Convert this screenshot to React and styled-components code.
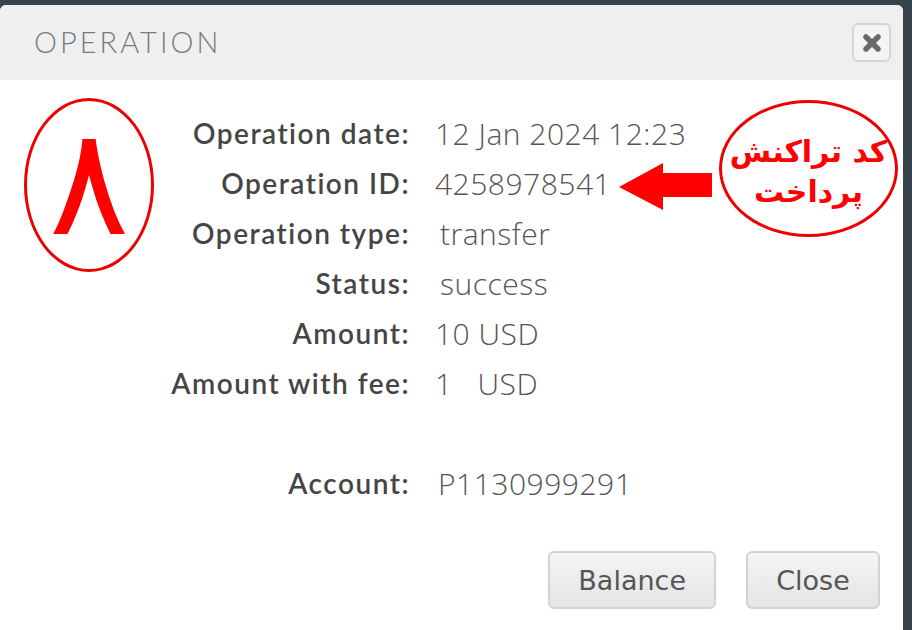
import React from "react";
import styled, { createGlobalStyle } from "styled-components";

const GlobalStyle = createGlobalStyle`
  html, body {
    margin: 0;
    padding: 0;
    background: #37444b;
  }
  body {
    width: 912px;
    height: 630px;
    overflow: hidden;
  }
`;

const rows = [
  { label: "Operation date:", value: "12 Jan 2024 12:23" },
  { label: "Operation ID:", value: "4258978541" },
  { label: "Operation type:", value: "transfer", indent: 5 },
  { label: "Status:", value: "success", indent: 5 },
  { label: "Amount:", value: "10 USD" },
  { label: "Amount with fee:", value: "1   USD" },
  { label: "", value: "" },
  { label: "Account:", value: "P1130999291", indent: 3 },
];

const App = () => {
  return (
    <Page>
      <GlobalStyle />
      <Dialog>
        <Header>
          <Title>OPERATION</Title>
          <CloseIcon aria-label="close">
            <svg width="22" height="22" viewBox="0 0 22 22">
              <path
                d="M5 5 L17 17 M17 5 L5 17"
                stroke="#6a6a6a"
                strokeWidth="5.5"
                strokeLinecap="round"
              />
            </svg>
          </CloseIcon>
        </Header>
        <Body>
          <DetailsGrid>
            {rows.map((row, i) => (
              <React.Fragment key={i}>
                <Label>{row.label}</Label>
                <Value $indent={row.indent || 0}>{row.value}</Value>
              </React.Fragment>
            ))}
          </DetailsGrid>
          <Footer>
            <Button>Balance</Button>
            <Button>Close</Button>
          </Footer>

          <NumberMark>
            <span>۸</span>
          </NumberMark>
          <Arrow width="94" height="50" viewBox="0 0 94 50">
            <polygon points="0,25 44,1 44,11 93,11 93,35 44,35 44,48" fill="#ff0000" />
          </Arrow>
          <Note>
            <span>کد تراکنش</span>
            <span>پرداخت</span>
          </Note>
        </Body>
      </Dialog>
    </Page>
  );
};

const Page = styled.div`
  width: 912px;
  height: 630px;
  padding-top: 5px;
  box-sizing: border-box;
`;

const Dialog = styled.div`
  width: 903px;
  height: 630px;
  background: #ffffff;
  border-radius: 6px 6px 0 0;
  overflow: hidden;
  display: flex;
  flex-direction: column;
`;

const Header = styled.div`
  height: 75px;
  background: #efefef;
  display: flex;
  align-items: center;
  justify-content: space-between;
  padding: 0 12px 0 34px;
  flex-shrink: 0;
`;

const Title = styled.div`
  font-family: "Lato", sans-serif;
  font-weight: 300;
  font-size: 29px;
  letter-spacing: 3px;
  color: #7a7a7a;
  margin-top: -2px;
`;

const CloseIcon = styled.div`
  width: 39px;
  height: 39px;
  box-sizing: border-box;
  border: 2px solid #d4d4d4;
  border-radius: 6px;
  background: #f4f4f4;
  display: flex;
  align-items: center;
  justify-content: center;
`;

const Body = styled.div`
  position: relative;
  flex: 1;
  padding-top: 28px;
`;

const DetailsGrid = styled.div`
  display: grid;
  grid-template-columns: 410px 1fr;
  grid-auto-rows: 50px;
  column-gap: 25px;
  align-items: center;
`;

const Label = styled.div`
  text-align: right;
  font-family: "Lato", sans-serif;
  font-weight: 600;
  font-size: 28px;
  letter-spacing: 1.5px;
  color: #454545;
  white-space: nowrap;
`;

const Value = styled.div`
  font-family: "Open Sans", sans-serif;
  font-weight: 300;
  font-size: 30px;
  letter-spacing: 0.5px;
  color: #555555;
  white-space: pre;
  padding-left: ${(p) => p.$indent}px;
`;

const Footer = styled.div`
  display: flex;
  justify-content: flex-end;
  gap: 30px;
  padding: 43px 23px 0 0;
`;

const Button = styled.button`
  height: 58px;
  padding: 0 28px;
  min-width: 134px;
  border: 2px solid #d2d2d2;
  border-radius: 6px;
  background: linear-gradient(#f5f5f5, #ececec 50%, #e4e4e4);
  font-family: "DejaVu Sans", sans-serif;
  font-size: 27px;
  color: #555555;
  cursor: pointer;
`;

const NumberMark = styled.div`
  position: absolute;
  left: 24px;
  top: 18px;
  width: 130px;
  height: 174px;
  box-sizing: border-box;
  border: 3px solid #ee0000;
  border-radius: 50%;
  display: flex;
  align-items: center;
  justify-content: center;

  span {
    font-family: "DejaVu Sans", sans-serif;
    font-weight: 400;
    font-size: 150px;
    line-height: 1;
    color: #ff0000;
    margin-top: -6px;
  }
`;

const Arrow = styled.svg`
  position: absolute;
  left: 619px;
  top: 82px;
`;

const Note = styled.div`
  position: absolute;
  left: 719px;
  top: 20px;
  width: 179px;
  height: 137px;
  box-sizing: border-box;
  border: 3px solid #ee0000;
  border-radius: 50%;
  display: flex;
  flex-direction: column;
  align-items: center;
  justify-content: center;
  direction: rtl;
  padding-top: 6px;

  span {
    font-family: "DejaVu Sans", sans-serif;
    font-weight: 700;
    font-size: 30px;
    line-height: 40px;
    color: #ff0000;
  }
`;

export default App;
